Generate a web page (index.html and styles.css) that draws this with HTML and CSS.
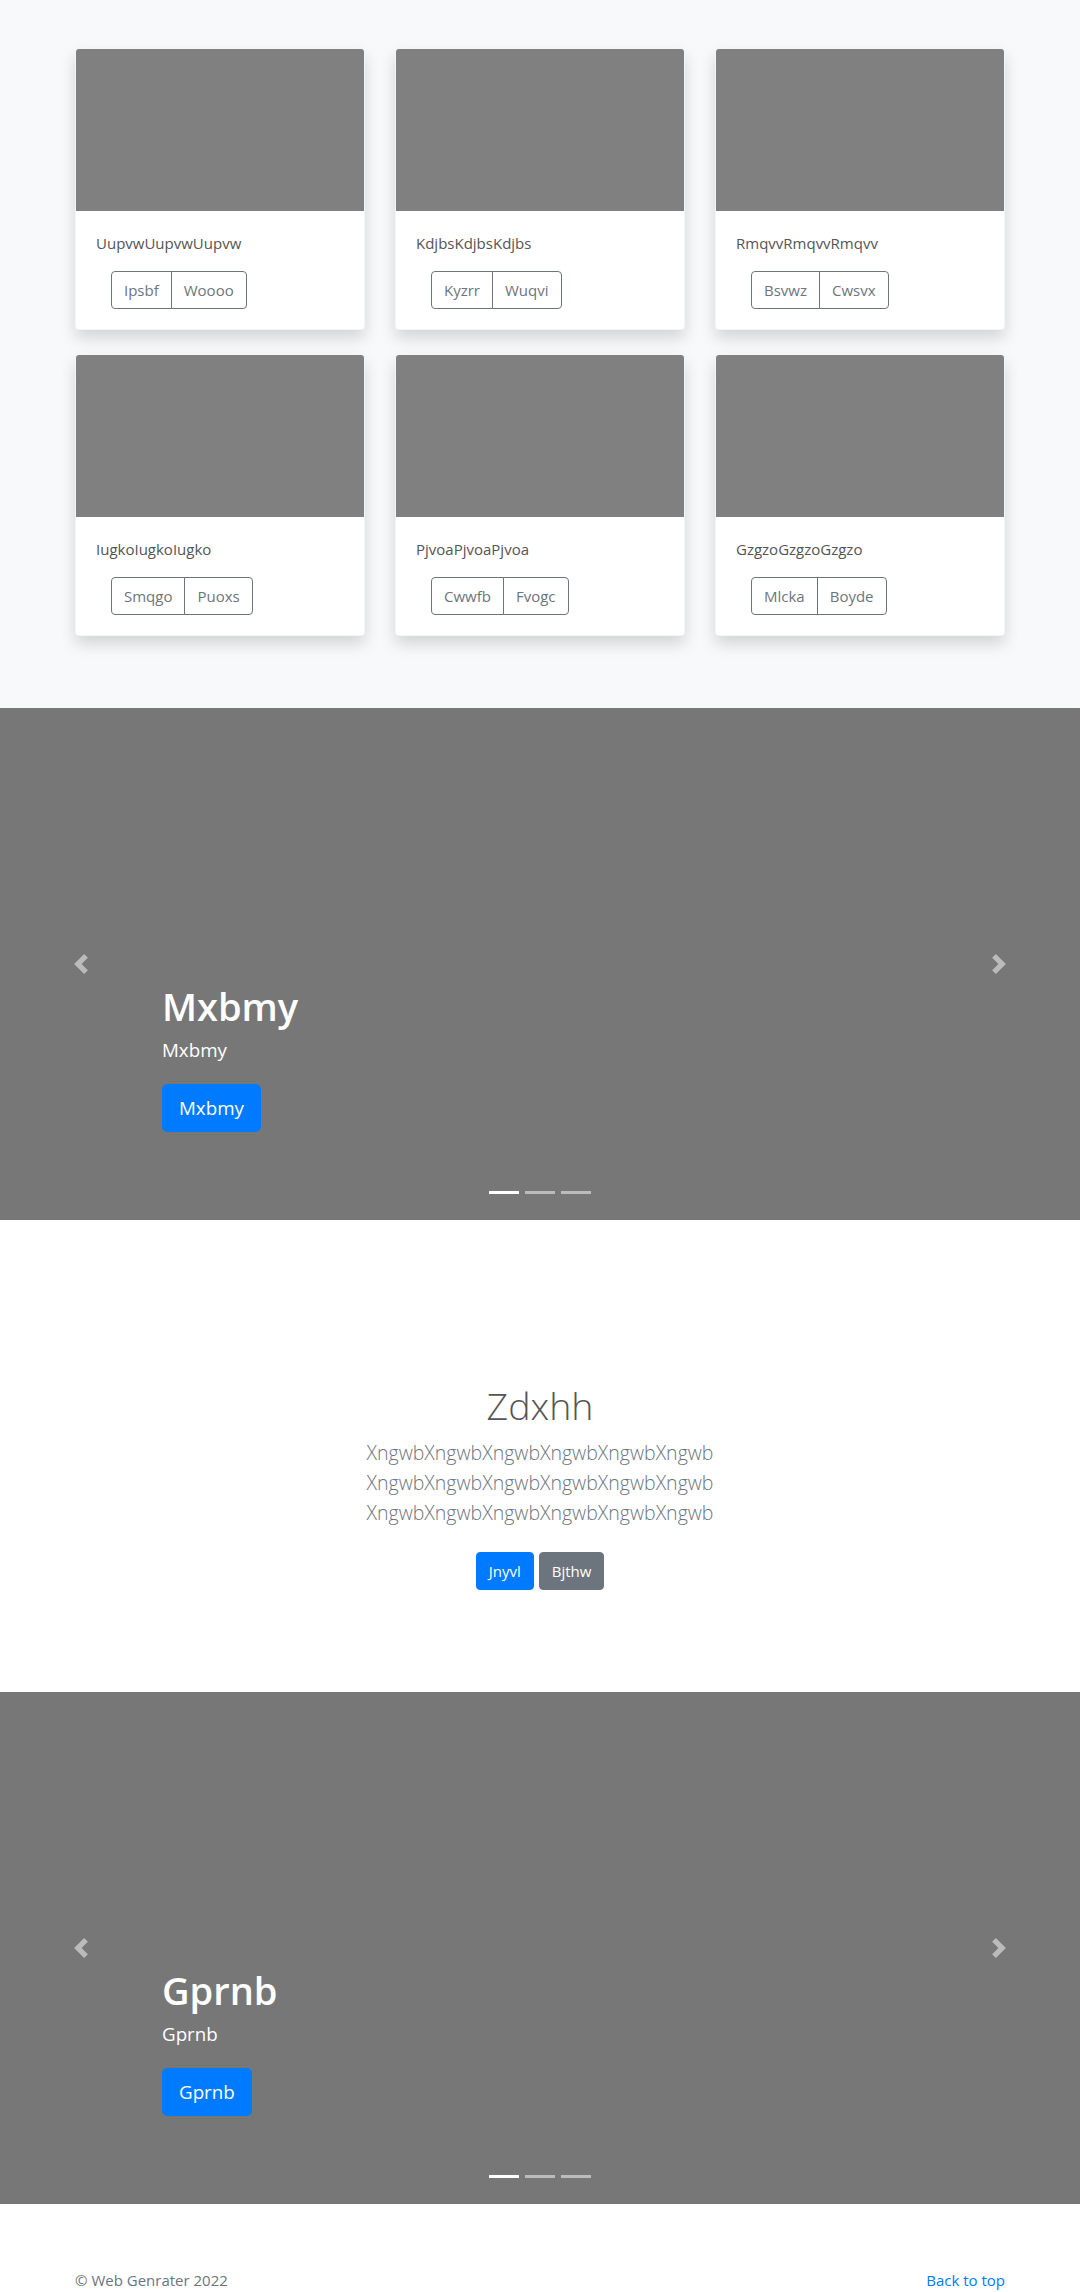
FILE: index.html
```html
<!DOCTYPE html>
<html lang="en">
<head>
<meta charset="utf-8">
<title>Web Genrater</title>
<link rel="stylesheet" href="styles.css">
</head>
<body>
<main>
  <section class="album">
    <div class="container">
      <div class="grid">
        <div class="card"><div class="card-img"></div><div class="card-body"><p class="card-text">UupvwUupvwUupvw</p><div class="btn-group"><a class="btn btn-outline" href="#">Ipsbf</a><a class="btn btn-outline" href="#">Woooo</a></div></div></div>
        <div class="card"><div class="card-img"></div><div class="card-body"><p class="card-text">KdjbsKdjbsKdjbs</p><div class="btn-group"><a class="btn btn-outline" href="#">Kyzrr</a><a class="btn btn-outline" href="#">Wuqvi</a></div></div></div>
        <div class="card"><div class="card-img"></div><div class="card-body"><p class="card-text">RmqvvRmqvvRmqvv</p><div class="btn-group"><a class="btn btn-outline" href="#">Bsvwz</a><a class="btn btn-outline" href="#">Cwsvx</a></div></div></div>
        <div class="card"><div class="card-img"></div><div class="card-body"><p class="card-text">IugkoIugkoIugko</p><div class="btn-group"><a class="btn btn-outline" href="#">Smqgo</a><a class="btn btn-outline" href="#">Puoxs</a></div></div></div>
        <div class="card"><div class="card-img"></div><div class="card-body"><p class="card-text">PjvoaPjvoaPjvoa</p><div class="btn-group"><a class="btn btn-outline" href="#">Cwwfb</a><a class="btn btn-outline" href="#">Fvogc</a></div></div></div>
        <div class="card"><div class="card-img"></div><div class="card-body"><p class="card-text">GzgzoGzgzoGzgzo</p><div class="btn-group"><a class="btn btn-outline" href="#">Mlcka</a><a class="btn btn-outline" href="#">Boyde</a></div></div></div>
      </div>
    </div>
  </section>

  <section class="carousel">
    <ol class="indicators"><li class="active"></li><li></li><li></li></ol>
    <div class="caption">
      <h1>Mxbmy</h1>
      <p>Mxbmy</p>
      <div><a class="btn btn-lg btn-primary" href="#">Mxbmy</a></div>
    </div>
    <a class="ctrl ctrl-prev" href="#"><svg viewBox="0 0 8 8" fill="#fff"><path d="M5.25 0l-4 4 4 4 1.5-1.5L4.25 4l2.5-2.5L5.25 0z"/></svg></a>
    <a class="ctrl ctrl-next" href="#"><svg viewBox="0 0 8 8" fill="#fff"><path d="M2.75 0l-1.5 1.5L3.75 4l-2.5 2.5L2.75 8l4-4-4-4z"/></svg></a>
  </section>

  <section class="hero">
    <div class="container">
      <h1>Zdxhh</h1>
      <p class="lead">XngwbXngwbXngwbXngwbXngwbXngwb<br>XngwbXngwbXngwbXngwbXngwbXngwb<br>XngwbXngwbXngwbXngwbXngwbXngwb</p>
      <div class="hero-actions"><a class="btn btn-primary" href="#">Jnyvl</a><a class="btn btn-secondary" href="#">Bjthw</a></div>
    </div>
  </section>

  <section class="carousel">
    <ol class="indicators"><li class="active"></li><li></li><li></li></ol>
    <div class="caption">
      <h1>Gprnb</h1>
      <p>Gprnb</p>
      <div><a class="btn btn-lg btn-primary" href="#">Gprnb</a></div>
    </div>
    <a class="ctrl ctrl-prev" href="#"><svg viewBox="0 0 8 8" fill="#fff"><path d="M5.25 0l-4 4 4 4 1.5-1.5L4.25 4l2.5-2.5L5.25 0z"/></svg></a>
    <a class="ctrl ctrl-next" href="#"><svg viewBox="0 0 8 8" fill="#fff"><path d="M2.75 0l-1.5 1.5L3.75 4l-2.5 2.5L2.75 8l4-4-4-4z"/></svg></a>
  </section>
</main>

<footer class="footer">
  <div class="container footer-inner">
    <p>© Web Genrater 2022</p>
    <p><a href="#">Back to top</a></p>
  </div>
</footer>
</body>
</html>
```

FILE: styles.css
```css
* { box-sizing: border-box; }

body {
  margin: 0;
  font-family: "Open Sans", "Noto Sans", sans-serif;
  font-size: 15px;
  line-height: 24px;
  color: #212529;
  background: #fff;
}

.container {
  width: 960px;
  margin: 0 auto;
  padding: 0 15px;
}

/* Album */
.album {
  background: #f8f9fa;
  padding: 48px 0 72px;
}

.grid {
  display: grid;
  grid-template-columns: repeat(3, 290px);
  column-gap: 30px;
  row-gap: 24px;
}

.card {
  background: #fff;
  border: 1px solid rgba(0, 0, 0, 0.04);
  border-radius: 4px;
  box-shadow: 0 8px 16px rgba(0, 0, 0, 0.15);
  overflow: hidden;
}

.card-img {
  height: 162px;
  background: #808080;
}

.card-body {
  padding: 20px;
}

.card-text {
  margin: 0 0 16px;
  color: #555;
}

/* Buttons */
.btn {
  display: inline-block;
  font-size: 15px;
  line-height: 24px;
  padding: 6px 12px;
  border: 1px solid transparent;
  border-radius: 4px;
  text-decoration: none;
  text-align: center;
}

.btn-outline {
  color: #6c757d;
  border-color: #6c757d;
  background: transparent;
}

.btn-primary {
  color: #fff;
  background: #007bff;
  border-color: #007bff;
}

.btn-secondary {
  color: #fff;
  background: #6c757d;
  border-color: #6c757d;
}

.btn-lg {
  font-size: 18.75px;
  line-height: 30px;
  padding: 8px 16px;
  border-radius: 5px;
}

.btn-group {
  display: inline-flex;
  margin-left: 15px;
}

.btn-group .btn:first-child {
  border-top-right-radius: 0;
  border-bottom-right-radius: 0;
}

.btn-group .btn:last-child {
  border-top-left-radius: 0;
  border-bottom-left-radius: 0;
  margin-left: -1px;
}

/* Carousel */
.carousel {
  position: relative;
  height: 512px;
  background: #777;
  overflow: hidden;
}

.ctrl {
  position: absolute;
  top: 0;
  bottom: 0;
  width: 15%;
  display: flex;
  align-items: center;
  justify-content: center;
  opacity: 0.5;
}

.ctrl-prev { left: 0; }
.ctrl-next { right: 0; }

.ctrl svg {
  width: 20px;
  height: 20px;
}

.indicators {
  position: absolute;
  left: 15%;
  right: 15%;
  bottom: 0;
  margin: 0 0 16px;
  padding: 0;
  list-style: none;
  display: flex;
  justify-content: center;
  z-index: 15;
}

.indicators li {
  width: 30px;
  height: 3px;
  margin: 0 3px 10px;
  background: #fff;
  opacity: 0.5;
}

.indicators li.active { opacity: 1; }

.caption {
  position: absolute;
  left: 15%;
  right: 15%;
  bottom: 88px;
  color: #fff;
  z-index: 10;
}

.caption h1 {
  font-size: 38px;
  font-weight: 600;
  line-height: 48px;
  margin: 0 0 5px;
}

.caption p {
  font-size: 18.75px;
  line-height: 30px;
  margin: 0 0 19px;
}

/* Hero */
.hero {
  text-align: center;
  padding: 162px 0 78px;
}

.hero h1 {
  font-size: 37.5px;
  font-weight: 300;
  line-height: 48px;
  margin: 0 0 8px;
  color: #555;
}

.lead {
  font-size: 19.5px;
  font-weight: 300;
  line-height: 30px;
  color: #6c757d;
  margin: 0 0 16px;
}

.hero-actions {
  display: flex;
  justify-content: center;
  gap: 5px;
  padding: 8px 0 24px;
}

/* Footer */
.footer {
  padding: 64px 0 48px;
  color: #6c757d;
}

.footer-inner {
  display: flex;
  justify-content: space-between;
}

.footer p { margin: 0 0 4px; }

.footer a {
  color: #007bff;
  text-decoration: none;
}
```
